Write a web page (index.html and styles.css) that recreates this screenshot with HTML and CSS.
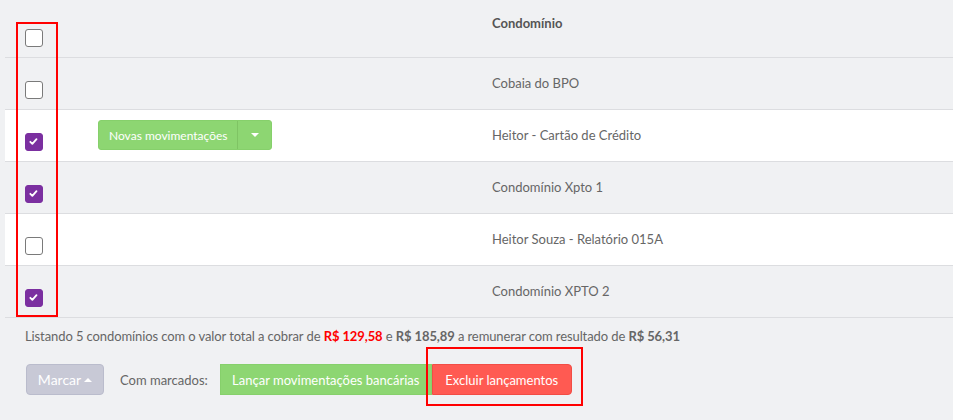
FILE: index.html
```html
<!DOCTYPE html>
<html lang="pt-BR">
<head>
<meta charset="utf-8">
<link rel="stylesheet" href="styles.css">
</head>
<body>
<div class="page">
  <div class="table">
    <div class="row head">
      <div class="c-check"><span class="cb"></span></div>
      <div class="c-action"></div>
      <div class="c-name">Condomínio</div>
    </div>
    <div class="row">
      <div class="c-check"><span class="cb"></span></div>
      <div class="c-action"></div>
      <div class="c-name">Cobaia do BPO</div>
    </div>
    <div class="row white">
      <div class="c-check"><span class="cb on"><svg viewBox="0 0 18 18"><path d="M5.2 9.4l2.4 2.4 5-5.6" fill="none" stroke="#fff" stroke-width="2.2" stroke-linecap="round" stroke-linejoin="round"/></svg></span></div>
      <div class="c-action">
        <div class="split">
          <span class="split-main">Novas movimentações</span>
          <span class="split-caret"><span class="caret-down"></span></span>
        </div>
      </div>
      <div class="c-name">Heitor - Cartão de Crédito</div>
    </div>
    <div class="row">
      <div class="c-check"><span class="cb on"><svg viewBox="0 0 18 18"><path d="M5.2 9.4l2.4 2.4 5-5.6" fill="none" stroke="#fff" stroke-width="2.2" stroke-linecap="round" stroke-linejoin="round"/></svg></span></div>
      <div class="c-action"></div>
      <div class="c-name">Condomínio Xpto 1</div>
    </div>
    <div class="row white">
      <div class="c-check"><span class="cb"></span></div>
      <div class="c-action"></div>
      <div class="c-name">Heitor Souza - Relatório 015A</div>
    </div>
    <div class="row">
      <div class="c-check"><span class="cb on"><svg viewBox="0 0 18 18"><path d="M5.2 9.4l2.4 2.4 5-5.6" fill="none" stroke="#fff" stroke-width="2.2" stroke-linecap="round" stroke-linejoin="round"/></svg></span></div>
      <div class="c-action"></div>
      <div class="c-name">Condomínio XPTO 2</div>
    </div>
  </div>

  <p class="summary">Listando 5 condomínios com o valor total a cobrar de <b class="neg">R$ 129,58</b> e <b>R$ 185,89</b> a remunerar com resultado de <b>R$ 56,31</b></p>

  <div class="actions">
    <button class="btn btn-mark">Marcar <span class="caret-up"></span></button>
    <span class="label">Com marcados:</span>
    <div class="group">
      <button class="btn btn-green">Lançar movimentações bancárias</button>
      <button class="btn btn-red">Excluir lançamentos</button>
    </div>
  </div>

  <div class="mark mark-col"></div>
  <div class="mark mark-btn"></div>
</div>
</body>
</html>
```
FILE: styles.css
```css
* { box-sizing: border-box; }
html, body { margin: 0; padding: 0; }
body {
  background: #f0f1f3;
  font-family: Lato, "Open Sans", sans-serif;
  font-size: 13px;
  color: #666;
  width: 953px;
  height: 420px;
  overflow: hidden;
}
.page { position: relative; padding-left: 5px; }

.row {
  display: flex;
  height: 52px;
  border-bottom: 1px solid #dcdde0;
}
.row.head { height: 58px; }
.row.white { background: #fff; }

.c-check { width: 93px; padding-left: 20px; padding-top: 23px; }
.head .c-check { padding-top: 29px; }
.c-action { width: 394px; padding-top: 10px; }
.c-name { flex: 1; padding-top: 17px; line-height: 17px; }
.head .c-name { padding-top: 15px; font-weight: bold; color: #555; }

.cb {
  display: block;
  width: 18px;
  height: 18px;
  border: 1.5px solid #7a7a7a;
  border-radius: 3px;
  background: #fff;
}
.cb.on { background: #7b2fa0; border-color: #7b2fa0; }
.cb svg { display: block; width: 15px; height: 15px; }

.split {
  display: inline-flex;
  height: 30px;
  background: #8dd672;
  border: 1px solid #86d06b;
  border-radius: 3px;
  color: #fff;
  font-size: 12px;
  white-space: nowrap;
}
.split-main { padding: 0 0 0 10px; display: flex; align-items: center; width: 139px; border-right: 1px solid #7fc464; }
.split-caret { width: 33px; display: flex; align-items: center; justify-content: center; }
.caret-down {
  width: 0; height: 0;
  border-left: 4px solid transparent;
  border-right: 4px solid transparent;
  border-top: 4px solid #fff;
}

.summary {
  margin: 0;
  padding: 10px 0 0 20px;
  line-height: 17px;
  color: #666;
  letter-spacing: -0.1px;
}
.summary b { color: #666; }
.summary b.neg { color: #f00; }

.actions {
  display: flex;
  align-items: center;
  padding: 19px 0 0 21px;
}
.btn {
  font-family: inherit;
  font-size: 13px;
  height: 31px;
  color: #fff;
  border: 1px solid transparent;
  cursor: pointer;
  padding: 0;
  white-space: nowrap;
  text-align: center;
}
.btn-mark {
  width: 78px;
  background: #c8c9d6;
  border-color: #babccc;
  border-radius: 4px;
  display: inline-flex;
  align-items: center;
  justify-content: center;
  gap: 3px;
  font-size: 14px;
}
.caret-up {
  width: 0; height: 0;
  border-left: 4px solid transparent;
  border-right: 4px solid transparent;
  border-bottom: 4px solid #fff;
  margin-top: 1px;
}
.label { margin-left: 16px; margin-right: 12px; color: #666; font-size: 13px; }
.group { display: flex; }
.btn-green { background: #8dd672; border-color: #86d06b; width: 212px; }
.btn-red { background: #ff5a52; border-color: #f24d45; border-radius: 0 4px 4px 0; width: 140px; }

.mark { position: absolute; border: 2px solid #ff0000; }
.mark-col { left: 16px; top: 22px; width: 42px; height: 295px; }
.mark-btn { left: 426px; top: 347px; width: 157px; height: 59px; }
```
